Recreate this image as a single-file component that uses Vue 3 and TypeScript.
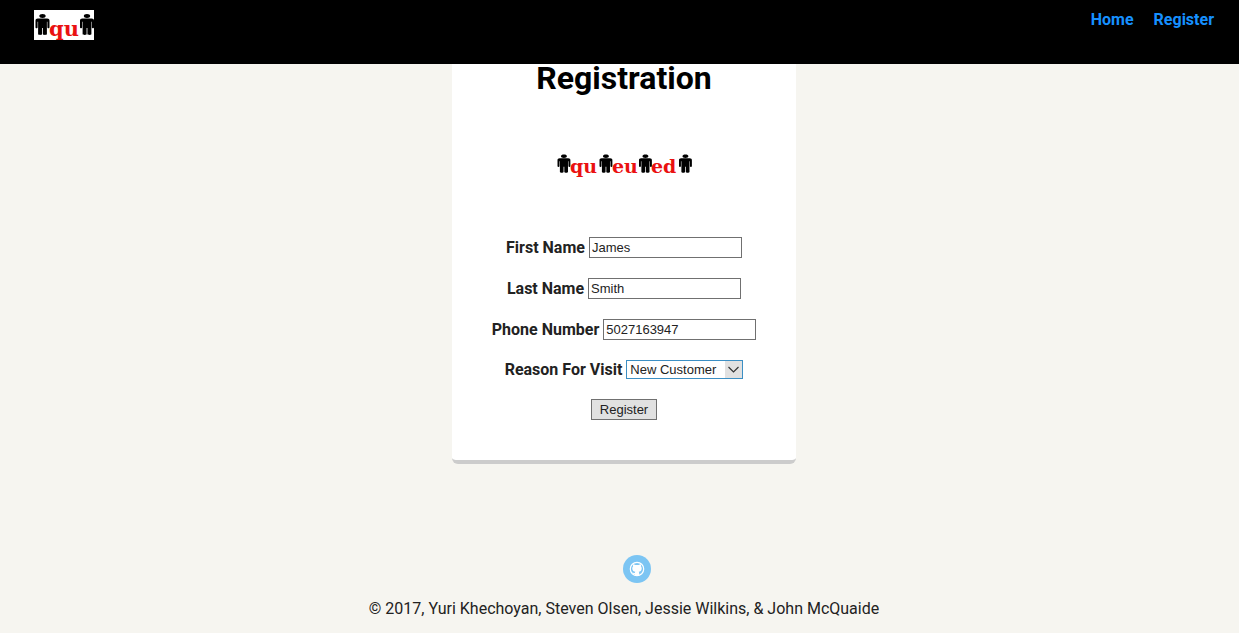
<script setup lang="ts">
import { ref } from 'vue'

interface TextField {
  id: string
  label: string
  type: string
  value: string
}

const fields = ref<TextField[]>([
  { id: 'first-name', label: 'First Name', type: 'text', value: 'James' },
  { id: 'last-name', label: 'Last Name', type: 'text', value: 'Smith' },
  { id: 'phone', label: 'Phone Number', type: 'tel', value: '5027163947' },
])
const reasons: string[] = ['New Customer']
const reason = ref<string>('New Customer')

const figure =
  'M7 0C9 0 10.2 .8 10.2 2C10.2 3.2 9 4 7 4C5 4 3.8 3.2 3.8 2C3.8 .8 5 0 7 0ZM2.4 4.4H11.6C13.2 4.4 14 5.2 14 6.6V13.6C14 14.6 11.9 14.6 11.9 13.6V7.8H11.4V20C11.4 21.2 7.4 21.2 7.4 20V14H6.6V20C6.6 21.2 2.6 21.2 2.6 20V7.8H2.1V13.6C2.1 14.6 0 14.6 0 13.6V6.6C0 5.2 .8 4.4 2.4 4.4Z'
</script>

<template>
  <div class="page">
    <header class="bar">
      <a href="#" class="brand" aria-label="Home page">
        <svg width="60" height="30" viewBox="0 0 60 30" aria-hidden="true">
          <rect width="60" height="30" fill="#fff" />
          <path :d="figure" transform="translate(1.5 4)" />
          <text x="15" y="26" class="wordmark large">qu</text>
          <path :d="figure" transform="translate(46 4)" />
        </svg>
      </a>
      <nav class="links">
        <a href="#">Home</a>
        <a href="#">Register</a>
      </nav>
    </header>

    <main class="card">
      <h1>Registration</h1>
      <svg class="logo" width="138" height="26" viewBox="0 0 138 26" aria-hidden="true">
        <path :d="figure" transform="translate(2.5 1.5) scale(.92 .87)" />
        <text x="15" y="20" class="wordmark">qu</text>
        <path :d="figure" transform="translate(44.5 1.5) scale(.92 .87)" />
        <text x="57" y="20" class="wordmark">eu</text>
        <path :d="figure" transform="translate(84 1.5) scale(.92 .87)" />
        <text x="96" y="20" class="wordmark">ed</text>
        <path :d="figure" transform="translate(124 1.5) scale(.92 .87)" />
      </svg>
      <form @submit.prevent>
        <div v-for="field in fields" :key="field.id" class="row">
          <label :for="field.id">{{ field.label }}</label>
          <input :id="field.id" v-model="field.value" :type="field.type" />
        </div>
        <div class="row">
          <label for="reason">Reason For Visit</label>
          <span class="picker">
            <select id="reason" v-model="reason">
              <option v-for="item in reasons" :key="item">{{ item }}</option>
            </select>
            <svg class="arrow" width="17" height="17" viewBox="0 0 17 17" aria-hidden="true">
              <rect width="17" height="17" fill="#e1e1e1" />
              <path d="M3.5 6L8.5 11L13.5 6" fill="none" stroke="#333" stroke-width="1.2" />
            </svg>
          </span>
        </div>
        <button type="submit">Register</button>
      </form>
    </main>

    <footer class="footer">
      <a href="#" class="github" aria-label="GitHub">
        <svg width="28" height="28" viewBox="0 0 28 28" aria-hidden="true">
          <circle cx="14" cy="14" r="14" fill="#7cc5f3" />
          <circle cx="14" cy="14" r="6.7" fill="none" stroke="#fff" stroke-width="1.2" />
          <path
            fill="#fff"
            d="M10.2 9.3C11 9.3 11.7 9.7 12.3 10.1C13.4 9.8 14.6 9.8 15.7 10.1C16.3 9.7 17 9.3 17.8 9.3C18.1 10 18.1 10.7 17.9 11.3C18.6 12 18.8 12.9 18.7 13.8C18.5 15.8 17.4 16.6 15.7 16.8C16.1 17.2 16.2 17.7 16.2 18.4V20.8H11.8V19C10.3 19.3 9.8 18.4 9.3 17.5C10.3 17.4 10.5 18.3 11.8 18C11.8 17.5 12 17.1 12.3 16.8C10.6 16.6 9.5 15.8 9.3 13.8C9.2 12.9 9.4 12 10.1 11.3C9.9 10.7 9.9 10 10.2 9.3Z"
          />
        </svg>
      </a>
      <p>© 2017, Yuri Khechoyan, Steven Olsen, Jessie Wilkins, &amp; John McQuaide</p>
    </footer>
  </div>
</template>

<style>
body {
  background: #f6f5f0;
}
</style>

<style scoped>
.page {
  display: flex;
  flex-direction: column;
  align-items: center;
  padding: 40px 0 12px 9px;
  font-family: Roboto, sans-serif;
  font-size: 16px;
  line-height: 24px;
  color: #222;
}
.bar {
  position: fixed;
  inset: 0 0 auto 0;
  box-sizing: border-box;
  height: 64px;
  padding: 10px 25px 0 34px;
  display: flex;
  justify-content: space-between;
  align-items: flex-start;
  background: #000;
}
.brand,
.github,
.logo {
  display: block;
}
.brand svg,
.github svg {
  display: block;
}
.wordmark {
  font-family: "DejaVu Serif", serif;
  font-weight: bold;
  font-size: 19px;
  fill: #ea1111;
}
.wordmark.large {
  font-size: 21px;
}
.links {
  display: flex;
  gap: 20px;
  line-height: 20px;
}
.links a {
  color: #1690ff;
  font-weight: bold;
  text-decoration: none;
}
.card {
  box-sizing: border-box;
  width: 344px;
  padding: 18px 20px 40px;
  display: flex;
  flex-direction: column;
  align-items: center;
  background: #fff;
  border-bottom: 4px solid #ccc;
  border-radius: 6px;
}
h1 {
  margin: 0;
  font-size: 32px;
  line-height: 40px;
  color: #000;
}
.logo {
  margin: 55px 0 58px;
}
form {
  display: flex;
  flex-direction: column;
  align-items: center;
  gap: 20px;
}
.row {
  display: flex;
  align-items: center;
  gap: 4px;
}
label {
  font-weight: bold;
  line-height: 19px;
}
input,
select,
button {
  box-sizing: border-box;
  margin: 0;
  border: 1px solid #707070;
  border-radius: 0;
  font-family: "Liberation Sans", Arial, sans-serif;
  font-size: 13px;
  color: #222;
}
input {
  width: 153px;
  height: 21px;
  padding: 1px 2px;
  background: #fff;
}
.picker {
  position: relative;
  display: flex;
}
select {
  appearance: none;
  width: 117px;
  height: 19px;
  padding: 0 18px 0 3px;
  border-color: #3c8fc4;
  background: #fff;
}
.arrow {
  position: absolute;
  top: 1px;
  right: 1px;
  pointer-events: none;
}
button {
  width: 66px;
  height: 21px;
  padding: 0;
  background: #e1e1e1;
}
.footer {
  margin-top: 91px;
  display: flex;
  flex-direction: column;
  align-items: center;
  gap: 14px;
}
.github {
  padding-left: 26px;
}
.footer p {
  margin: 0;
}
</style>
